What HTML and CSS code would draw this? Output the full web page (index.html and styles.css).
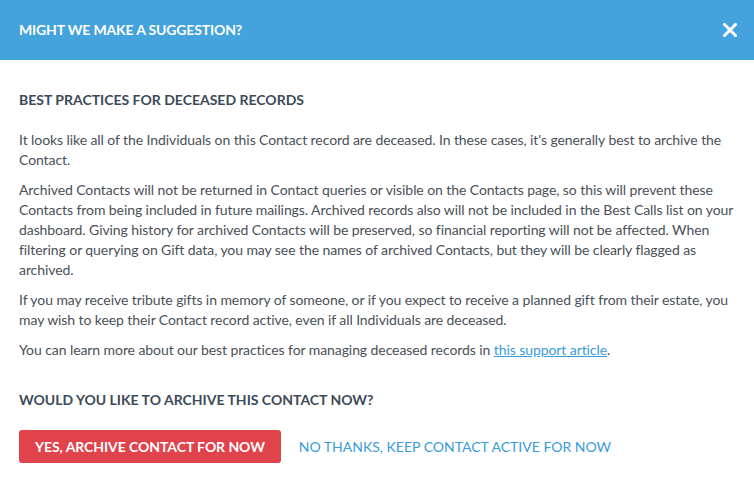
FILE: index.html
```html
<!DOCTYPE html>
<html lang="en">
<head>
    <meta charset="UTF-8">
    <meta name="viewport" content="width=device-width, initial-scale=1.0">
    <title>Might We Make a Suggestion?</title>
    <link rel="stylesheet" href="styles.css">
</head>
<body>
    <div class="modal">
        <!-- Modal header -->
        <div class="modal-header">
            <h1 class="modal-title">Might we make a suggestion?</h1>
            <button class="close-btn" type="button" aria-label="Close">
                <svg width="14" height="14" viewBox="0 0 14 14">
                    <path d="M1.5 1.5 L12.5 12.5 M12.5 1.5 L1.5 12.5" stroke="#fff" stroke-width="3" stroke-linecap="square"/>
                </svg>
            </button>
        </div>

        <!-- Modal body -->
        <div class="modal-body">
            <h2 class="section-title">Best practices for deceased records</h2>

            <p>It looks like all of the Individuals on this Contact record are deceased. In these cases, it's generally best to archive the Contact.</p>
            <p>Archived Contacts will not be returned in Contact queries or visible on the Contacts page, so this will prevent these Contacts from being included in future mailings. Archived records also will not be included in the Best Calls list on your dashboard. Giving history for archived Contacts will be preserved, so financial reporting will not be affected. When filtering or querying on Gift data, you may see the names of archived Contacts, but they will be clearly flagged as archived.</p>
            <p>If you may receive tribute gifts in memory of someone, or if you expect to receive a planned gift from their estate, you may wish to keep their Contact record active, even if all Individuals are deceased.</p>
            <p>You can learn more about our best practices for managing deceased records in <a href="#">this support article</a>.</p>

            <h2 class="section-title question">Would you like to archive this Contact now?</h2>

            <div class="actions">
                <button class="btn-archive" type="button">Yes, archive Contact for now</button>
                <button class="btn-keep" type="button">No thanks, keep Contact active for now</button>
            </div>
        </div>
    </div>
</body>
</html>
```

FILE: styles.css
```css
/* General page styling */
body {
    margin: 0;
    font-family: Lato, "Open Sans", sans-serif;
    background-color: #fff;
    color: #4a5058;
}

.modal {
    width: 754px;
}

/* Header bar */
.modal-header {
    height: 60px;
    padding: 0 17px 0 19px;
    background-color: #44a2dc; /* Blue header */
    display: flex;
    align-items: center;
    justify-content: space-between;
    box-sizing: border-box;
}

.modal-title {
    margin: 0;
    font-size: 14px;
    font-weight: 700;
    line-height: 20px;
    letter-spacing: -0.15px;
    color: #fff;
    text-transform: uppercase;
}

.close-btn {
    border: none;
    background: none;
    padding: 0;
    width: 14px;
    height: 14px;
    display: flex;
    cursor: pointer;
}

/* Body */
.modal-body {
    padding: 30px 19px 0 19px;
}

.section-title {
    margin: 0 0 20px 0;
    font-size: 14px;
    font-weight: 700;
    line-height: 20px;
    color: #3d4a57;
    text-transform: uppercase;
}

.section-title.question {
    margin-top: 30px;
}

p {
    margin: 0 0 10px 0;
    font-size: 14px;
    line-height: 20px;
    letter-spacing: -0.08px;
}

a {
    color: #3a9bdb;
}

/* Action buttons */
.actions {
    display: flex;
    align-items: center;
    gap: 18px;
}

.btn-archive {
    height: 33px;
    padding: 0 16px;
    border: none;
    border-radius: 3px;
    background-color: #e0434b; /* Red button */
    color: #fff;
    font-family: inherit;
    font-size: 14px;
    font-weight: 700;
    letter-spacing: -0.07px;
    text-transform: uppercase;
    cursor: pointer;
}

.btn-keep {
    padding: 0;
    border: none;
    background: none;
    color: #3a9bdb;
    font-family: inherit;
    font-size: 14px;
    font-weight: 400;
    text-transform: uppercase;
    cursor: pointer;
}
```
